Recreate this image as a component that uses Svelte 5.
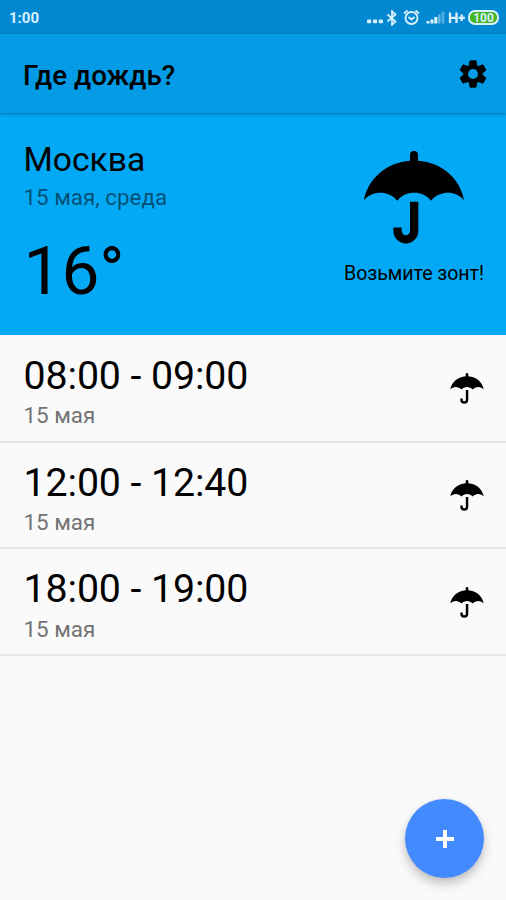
<script>
  const slots = [
    { time: '08:00 - 09:00', date: '15 мая' },
    { time: '12:00 - 12:40', date: '15 мая' },
    { time: '18:00 - 19:00', date: '15 мая' }
  ];
  const teeth = [0, 60, 120];
</script>

{#snippet umbrella(cls, stroke)}
  <svg class={cls} viewBox="0 0 306 280" aria-hidden="true">
    <path d="M141 29V12a12 12 0 0 1 24 0v17C238 34 291 82 304 148C280 118 229 117 204 150C180 118 127 118 103 150C78 117 27 118 2 148C15 82 70 34 141 29Z" />
    <path d="M153.500 153V241a25 25 0 0 1-50 0V230" fill="none" stroke="#000" stroke-width={stroke} />
  </svg>
{/snippet}

<div class="screen">
  <div class="status">
    <span class="clock">1:00</span>
    <div class="indicators">
      <svg class="dots" width="17" height="14" viewBox="0 0 17 14"><g fill="#d9f0ff"><rect x="0" y="8.500" width="4.200" height="3.800" rx="1" /><rect x="6" y="8.500" width="4.200" height="3.800" rx="1" /><rect x="11.800" y="8.500" width="4.200" height="3.800" rx="1" /></g></svg>
      <svg class="bt" width="12" height="16" viewBox="0 0 12 16"><path d="M1.500 4.500L9.500 11.500L6 14.800V1.200L9.500 4.500L1.500 11.500" fill="none" stroke="#d9f0ff" stroke-width="1.800" /></svg>
      <svg class="alarm" width="17" height="17" viewBox="0 0 17 17"><g fill="none" stroke="#d9f0ff" stroke-width="1.800"><circle cx="8.500" cy="9" r="6" /><path d="M1 4.500L4.500 1.500M16 4.500L12.500 1.500M5.500 8L8.500 10.500L11.500 8" /></g></svg>
      <svg class="signal" width="20" height="13" viewBox="0 0 20 13"><g fill="#d9f0ff"><rect x="0.500" y="10" width="3" height="2.500" /><rect x="4.500" y="8.500" width="3" height="4" /><rect x="8.300" y="6" width="3" height="6.500" /><rect x="12" y="3.500" width="2.500" height="9" opacity=".45" /><rect x="15.500" y="0.500" width="3" height="12" opacity=".35" /></g></svg>
      <svg class="net" width="18" height="13" viewBox="0 0 18 13" role="img" aria-label="H+"><path d="M2 1.500V12M8.500 1.500V12M2 6.800H8.500M10.500 6.800H17M13.700 3.500V10" fill="none" stroke="#d9f0ff" stroke-width="2.300" /></svg>
      <span class="battery">100</span>
    </div>
  </div>

  <header>
    <h1>Где дождь?</h1>
    <svg class="gear" viewBox="-14 -14 28 28" role="img" aria-label="Настройки">
      {#each teeth as angle}
        <path d="M-3 -13.200H3L4 -8V8L3 13.200H-3L-4 8V-8Z" transform="rotate({angle})" stroke="#000" stroke-width="0.800" stroke-linejoin="round" />
      {/each}
      <circle r="9.500" />
      <circle r="5" fill="#039be5" />
    </svg>
  </header>

  <section class="today">
    <div>
      <div class="city">Москва</div>
      <div class="day">15 мая, среда</div>
      <div class="temp">16°</div>
    </div>
    <div class="advice">
      {@render umbrella('large', 25)}
      <div class="hint">Возьмите зонт!</div>
    </div>
  </section>

  <ul>
    {#each slots as slot}
      <li>
        <div>
          <div class="time">{slot.time}</div>
          <div class="date">{slot.date}</div>
        </div>
        {@render umbrella('small', 22)}
      </li>
    {/each}
  </ul>

  <button class="fab" aria-label="Добавить">
    <svg width="20" height="20" viewBox="0 0 20 20"><path d="M10 1V19M1 10H19" stroke="#fff" stroke-width="4" /></svg>
  </button>
</div>

<style>
  .screen {
    position: relative;
    width: 506px;
    height: 900px;
    overflow: hidden;
    background: #fafafa;
    color: #000;
    font-family: Roboto, sans-serif;
  }
  .status {
    display: flex;
    justify-content: space-between;
    box-sizing: border-box;
    height: 34px;
    padding: 0 7px 0 9px;
    background: #0288d1;
    color: #d9f0ff;
  }
  .clock {
    font-size: 15px;
    font-weight: 700;
    line-height: 36px;
  }
  .indicators {
    display: flex;
    align-items: center;
    padding-top: 1px;
  }
  .dots { margin: 1px 2px 0 0; }
  .bt { margin-right: 5px; }
  .alarm { margin-right: 6px; }
  .signal { margin-right: 2px; }
  .net { margin-right: 2px; }
  .battery {
    box-sizing: border-box;
    width: 31px;
    height: 15px;
    border: 2px solid #d9f0ff;
    border-radius: 7px;
    background: #43b51f;
    font-size: 12px;
    font-weight: 700;
    line-height: 12px;
    text-align: center;
  }
  header {
    position: relative;
    display: flex;
    align-items: center;
    justify-content: space-between;
    box-sizing: border-box;
    height: 79px;
    padding: 0 19px 0 23px;
    background: #039be5;
    box-shadow: 0 1px 3px rgba(0, 0, 0, 0.350);
  }
  h1 {
    margin: 4px 0 0;
    font-size: 27.800px;
    font-weight: 500;
    line-height: 36px;
  }
  .gear {
    width: 28px;
    height: 28px;
  }
  .today {
    display: flex;
    justify-content: space-between;
    box-sizing: border-box;
    height: 222px;
    padding: 27px 22px 0 23.500px;
    background: #03a9f4;
  }
  .city {
    font-size: 33.600px;
    line-height: 40px;
  }
  .day {
    margin-top: 2px;
    font-size: 22.400px;
    line-height: 30px;
    color: rgba(0, 0, 0, 0.540);
  }
  .temp {
    margin-top: 19px;
    font-size: 67.500px;
    line-height: 80px;
  }
  .advice {
    display: flex;
    flex-direction: column;
    align-items: center;
    padding-top: 11px;
  }
  .large {
    width: 102px;
    height: 93px;
  }
  .hint {
    margin-top: 18px;
    font-size: 19.600px;
    line-height: 24px;
    letter-spacing: -0.050px;
  }
  ul {
    margin: 0;
    padding: 0.700px 0 0;
    list-style: none;
  }
  li {
    display: flex;
    justify-content: space-between;
    box-sizing: border-box;
    height: 106.900px;
    padding: 17px 22px 0 23.500px;
    border-bottom: 2px solid #e6e6e6;
  }
  .time {
    font-size: 39.300px;
    line-height: 46px;
    letter-spacing: -0.100px;
  }
  .date {
    margin-top: 1.400px;
    font-size: 22.400px;
    line-height: 30px;
    color: #737373;
  }
  .small {
    width: 34px;
    height: 31px;
    margin-top: 20.500px;
  }
  .fab {
    position: absolute;
    right: 22px;
    bottom: 22px;
    display: flex;
    align-items: center;
    justify-content: center;
    width: 79px;
    height: 79px;
    padding: 0;
    border: 0;
    border-radius: 50%;
    background: #448aff;
    box-shadow: 0 6px 11px rgba(0, 0, 0, 0.220), 0 1px 4px rgba(0, 0, 0, 0.060);
  }
</style>
